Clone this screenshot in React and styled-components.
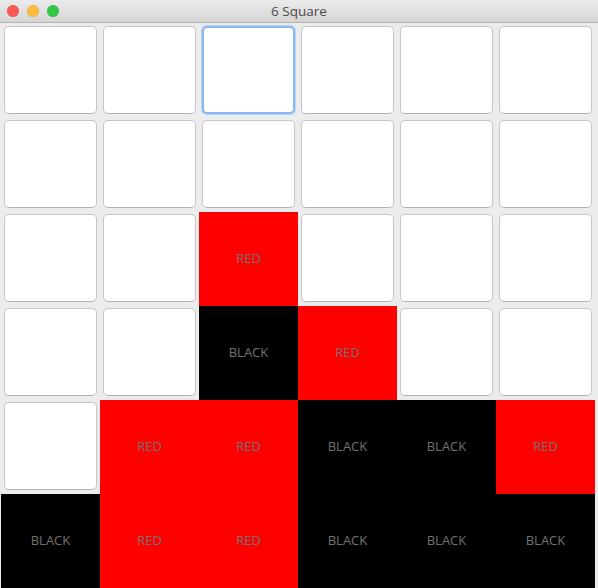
import React from "react";
import styled, { createGlobalStyle } from "styled-components";

const GlobalStyle = createGlobalStyle`
  html, body {
    margin: 0;
    padding: 0;
    background: #ececec;
  }
  body {
    font-family: "Open Sans", "DejaVu Sans", sans-serif;
  }
`;

const board = [
  ["", "", "", "", "", ""],
  ["", "", "", "", "", ""],
  ["", "", "RED", "", "", ""],
  ["", "", "BLACK", "RED", "", ""],
  ["", "RED", "RED", "BLACK", "BLACK", "RED"],
  ["BLACK", "RED", "RED", "BLACK", "BLACK", "BLACK"],
];

const Window = styled.div`
  width: 598px;
  height: 588px;
  background: #ececec;
  overflow: hidden;
`;

const TitleBar = styled.div`
  position: relative;
  height: 22px;
  background: linear-gradient(#ebebeb, #d5d5d5);
  border-bottom: 1px solid #b4b4b4;
  display: flex;
  align-items: center;
  justify-content: center;
`;

const Lights = styled.div`
  position: absolute;
  left: 7px;
  top: 5px;
  display: flex;
  gap: 8px;
`;

const Light = styled.span`
  width: 12px;
  height: 12px;
  border-radius: 50%;
  background: ${(p) => p.color};
  box-shadow: inset 0 0 0 0.5px rgba(0, 0, 0, 0.12);
`;

const Title = styled.div`
  font-family: "Open Sans", "DejaVu Sans", sans-serif;
  font-size: 13.5px;
  color: #4a4a4a;
`;

const Grid = styled.div`
  display: grid;
  grid-template-columns: repeat(6, 99px);
  grid-auto-rows: 94px;
  padding: 1px 0 0 1px;
`;

const Cell = styled.div`
  display: flex;
  align-items: center;
  justify-content: center;
  background: ${(p) =>
    p.color === "RED" ? "#ff0000" : p.color === "BLACK" ? "#000000" : "transparent"};
  padding: ${(p) => (p.color ? "0 0 2px 0" : "2px 3px 4px 3px")};
`;

const Square = styled.button`
  width: 100%;
  height: 100%;
  margin: 0;
  padding: 0;
  background: #ffffff;
  border: ${(p) => (p.focused ? "2px solid #8ab8ec" : "1px solid #c6c6c6")};
  border-bottom-color: ${(p) => (p.focused ? "#8ab8ec" : "#b3b3b3")};
  box-shadow: ${(p) => (p.focused ? "0 0 0 1px #b5d3f5" : "none")};
  border-radius: 5px;
  outline: none;
`;

const Label = styled.span`
  font-family: "Open Sans", "DejaVu Sans", sans-serif;
  font-size: 13px;
  color: #727272;
`;

export default function App() {
  return (
    <Window>
      <GlobalStyle />
      <TitleBar>
        <Lights>
          <Light color="#fc5753" />
          <Light color="#fdbc40" />
          <Light color="#33c748" />
        </Lights>
        <Title>6 Square</Title>
      </TitleBar>
      <Grid>
        {board.map((row, r) =>
          row.map((c, i) => (
            <Cell key={`${r}-${i}`} color={c}>
              {c ? <Label>{c}</Label> : <Square focused={r === 0 && i === 2} />}
            </Cell>
          ))
        )}
      </Grid>
    </Window>
  );
}
